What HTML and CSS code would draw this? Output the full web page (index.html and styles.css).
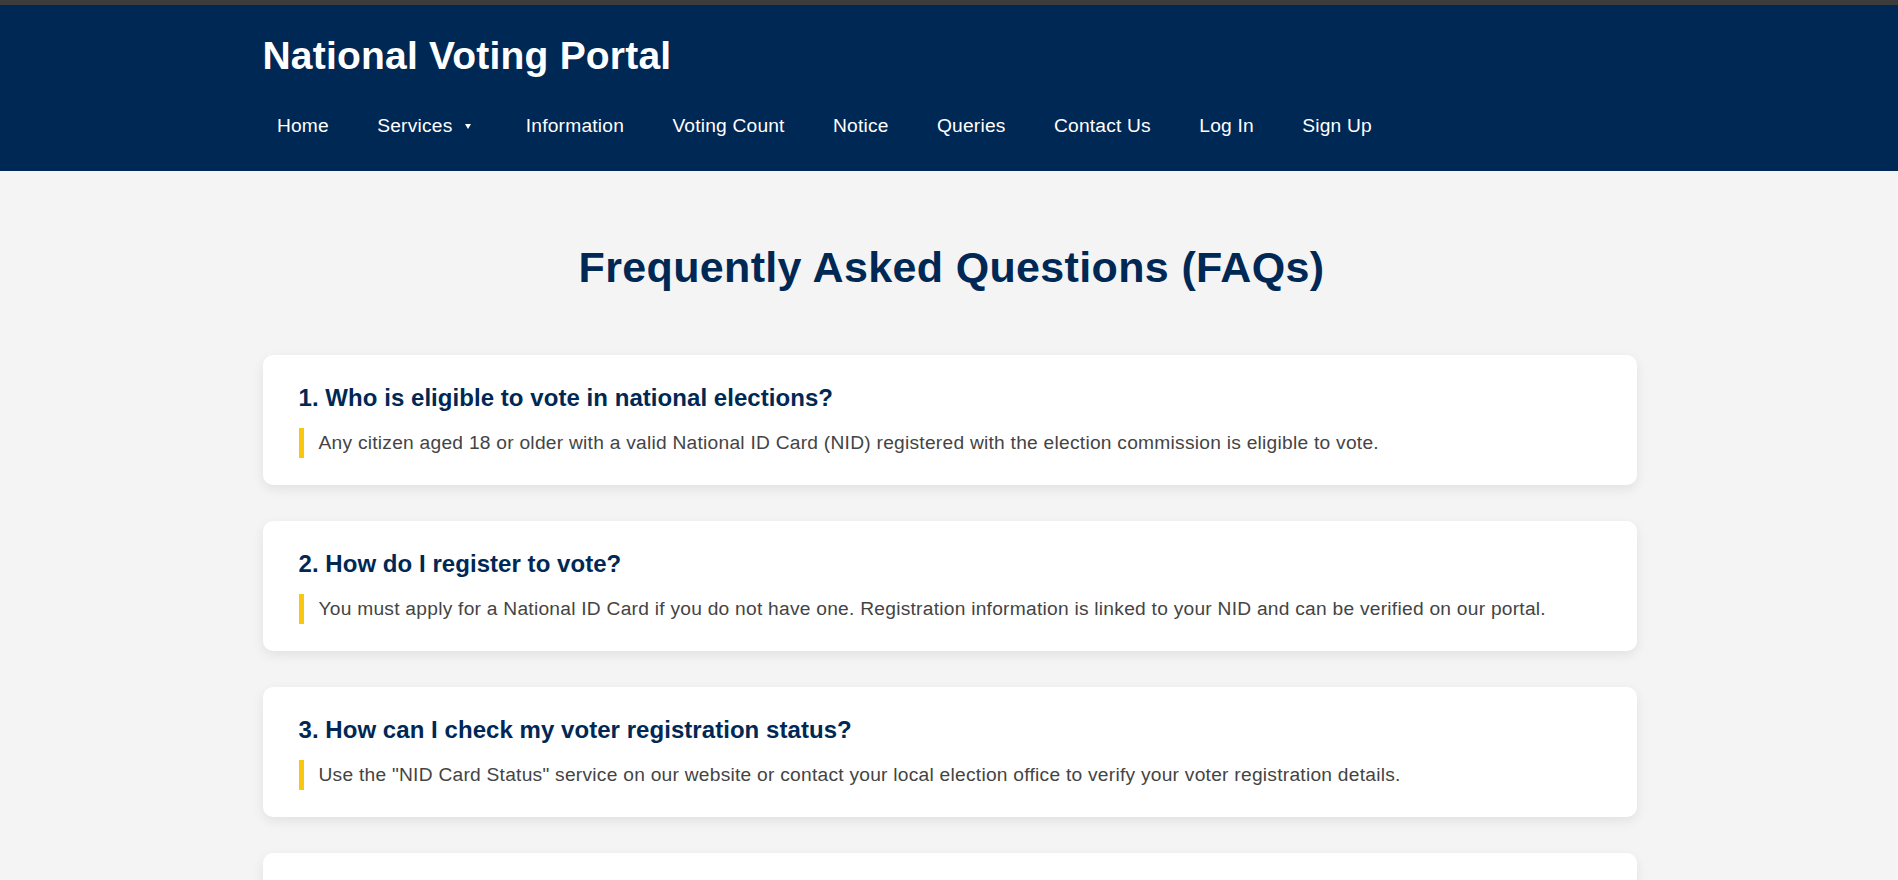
FILE: index.html
```html
<!DOCTYPE html>
<html lang="en">
<head>
<meta charset="utf-8">
<title>FAQs - National Voting Portal</title>
<link rel="stylesheet" href="styles.css">
</head>
<body>
<header class="site-header">
  <div class="container">
    <h1 class="site-title">National Voting Portal</h1>
    <nav class="main-nav">
      <a href="#" class="nav-link">Home</a>
      <a href="#" class="nav-link">Services<span class="caret"></span></a>
      <a href="#" class="nav-link">Information</a>
      <a href="#" class="nav-link">Voting Count</a>
      <a href="#" class="nav-link">Notice</a>
      <a href="#" class="nav-link">Queries</a>
      <a href="#" class="nav-link">Contact Us</a>
      <a href="#" class="nav-link">Log In</a>
      <a href="#" class="nav-link">Sign Up</a>
    </nav>
  </div>
</header>
<main class="faq-page">
  <div class="container">
    <h2 class="page-title">Frequently Asked Questions (FAQs)</h2>
    <div class="faq-list">
      <section class="faq-card">
        <h3 class="faq-q">1. Who is eligible to vote in national elections?</h3>
        <p class="faq-a">Any citizen aged 18 or older with a valid National ID Card (NID) registered with the election commission is eligible to vote.</p>
      </section>
      <section class="faq-card">
        <h3 class="faq-q">2. How do I register to vote?</h3>
        <p class="faq-a">You must apply for a National ID Card if you do not have one. Registration information is linked to your NID and can be verified on our portal.</p>
      </section>
      <section class="faq-card">
        <h3 class="faq-q">3. How can I check my voter registration status?</h3>
        <p class="faq-a">Use the "NID Card Status" service on our website or contact your local election office to verify your voter registration details.</p>
      </section>
      <section class="faq-card">
        <h3 class="faq-q">4. What documents do I need to bring on election day?</h3>
        <p class="faq-a">Bring your National ID Card (NID) to your assigned polling station. Your identity will be verified before you are allowed to cast your vote.</p>
      </section>
    </div>
  </div>
</main>
</body>
</html>
```

FILE: styles.css
```css
* {
  box-sizing: border-box;
}

body {
  margin: 0;
  background: #f4f4f4;
  font-family: "Liberation Sans", Arial, Helvetica, sans-serif;
  color: #444;
}

.container {
  max-width: 1375px;
  margin: 0 auto;
  padding-left: 1px;
}

.site-header {
  background: #002855;
  border-top: 5px solid #3c3c3c;
  padding: 28px 0 22px;
}

.site-title {
  margin: 0;
  font-size: 39px;
  line-height: 45px;
  font-weight: bold;
  letter-spacing: 0.2px;
  color: #ffffff;
}

.main-nav {
  display: flex;
  align-items: center;
  gap: 19.6px;
  margin-top: 25px;
}

.nav-link {
  display: flex;
  align-items: center;
  padding: 12px 14.4px;
  color: #ffffff;
  text-decoration: none;
  font-size: 19.2px;
  line-height: 22px;
  letter-spacing: 0.2px;
}

.caret {
  display: inline-block;
  width: 0;
  height: 0;
  border-left: 3px solid transparent;
  border-right: 3px solid transparent;
  border-top: 5px solid #ffffff;
  margin-left: 13px;
  margin-right: 6px;
  margin-top: 1px;
}

.faq-page {
  padding-top: 71px;
  padding-bottom: 40px;
}

.page-title {
  margin: 0 0 63px;
  padding-left: 4px;
  text-align: center;
  font-size: 43px;
  line-height: 50px;
  font-weight: bold;
  letter-spacing: 0.35px;
  color: #002855;
}

.faq-list {
  display: flex;
  flex-direction: column;
  gap: 36px;
}

.faq-card {
  background: #ffffff;
  border-radius: 10px;
  padding: 29px 36px 27px;
  box-shadow: 0 4px 12px rgba(0, 0, 0, 0.08);
}

.faq-q {
  margin: 0 0 16px;
  font-size: 24px;
  line-height: 28px;
  font-weight: bold;
  letter-spacing: 0.05px;
  color: #002855;
}

.faq-a {
  margin: 0;
  border-left: 5px solid #f9c80e;
  padding-left: 15px;
  font-size: 19.2px;
  line-height: 30px;
  letter-spacing: 0.25px;
  color: #444444;
}
```
